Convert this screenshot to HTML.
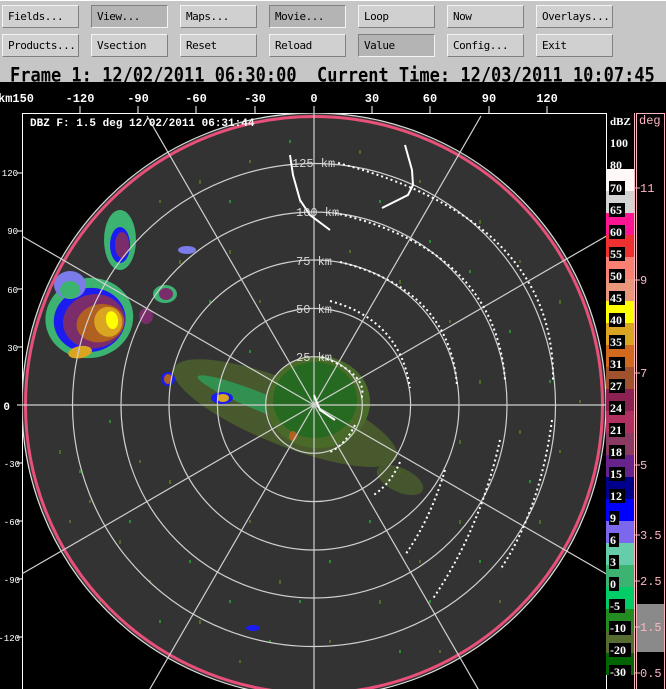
<!DOCTYPE html>
<html><head><meta charset="utf-8"><style>
*{margin:0;padding:0;box-sizing:border-box}
body{width:666px;height:689px;overflow:hidden;background:#000;position:relative;font-family:"Liberation Mono","DejaVu Sans Mono",monospace}
#top{position:absolute;left:0;top:0;width:666px;height:82px;background:#c6c6c6;border-top:1px solid #fff}
.b{position:absolute;height:23px;width:77px;background:#d0d0d0;border:1px solid;border-color:#f4f4f4 #808080 #808080 #f4f4f4;font:11px "DejaVu Sans Mono",monospace;color:#000;padding:4px 0 0 5px;letter-spacing:-0.5px;white-space:nowrap}
.b.d{background:#b4b4b4;border-color:#808080 #f4f4f4 #f4f4f4 #808080}
#title{position:absolute;left:10px;top:63px;font:bold 17px "DejaVu Sans Mono",monospace;color:#000;white-space:pre;letter-spacing:0px;height:19px;overflow:hidden;transform:scaleY(1.15);transform-origin:top}
</style></head><body>
<div id="top">
<div class="b" style="left:2px;top:4px">Fields...</div>
<div class="b d" style="left:91px;top:4px">View...</div>
<div class="b" style="left:180px;top:4px">Maps...</div>
<div class="b d" style="left:269px;top:4px">Movie...</div>
<div class="b" style="left:358px;top:4px">Loop</div>
<div class="b" style="left:447px;top:4px">Now</div>
<div class="b" style="left:536px;top:4px">Overlays...</div>
<div class="b" style="left:2px;top:33px">Products...</div>
<div class="b" style="left:91px;top:33px">Vsection</div>
<div class="b" style="left:180px;top:33px">Reset</div>
<div class="b" style="left:269px;top:33px">Reload</div>
<div class="b d" style="left:358px;top:33px">Value</div>
<div class="b" style="left:447px;top:33px">Config...</div>
<div class="b" style="left:536px;top:33px">Exit</div>
<div id="title">Frame 1: 12/02/2011 06:30:00  Current Time: 12/03/2011 10:07:45</div>
</div>
<svg width="666" height="689" style="position:absolute;left:0;top:0" font-family="Liberation Mono, monospace">
<defs>
<clipPath id="fr"><rect x="22" y="113" width="585" height="576"/></clipPath>
<clipPath id="disk"><circle cx="314" cy="405" r="291"/></clipPath>
</defs>
<g fill="#fff" font-size="12" font-weight="bold" text-anchor="middle">
<text x="16" y="102">km150</text>
<text x="80" y="102">-120</text><text x="138" y="102">-90</text><text x="196" y="102">-60</text><text x="255" y="102">-30</text><text x="314" y="102">0</text><text x="372" y="102">30</text><text x="430" y="102">60</text><text x="489" y="102">90</text><text x="547" y="102">120</text>
</g>
<g stroke="#fff" stroke-width="1">
<line x1="22" y1="113.5" x2="607" y2="113.5"/>
<line x1="22.5" y1="113" x2="22.5" y2="689"/>
<line x1="606.5" y1="113" x2="606.5" y2="689"/>
<line x1="80" y1="106" x2="80" y2="113"/><line x1="138" y1="106" x2="138" y2="113"/><line x1="196" y1="106" x2="196" y2="113"/><line x1="255" y1="106" x2="255" y2="113"/><line x1="314" y1="106" x2="314" y2="113"/><line x1="372" y1="106" x2="372" y2="113"/><line x1="430" y1="106" x2="430" y2="113"/><line x1="489" y1="106" x2="489" y2="113"/><line x1="547" y1="106" x2="547" y2="113"/>
<line x1="17" y1="173" x2="22" y2="173"/><line x1="17" y1="231" x2="22" y2="231"/><line x1="17" y1="289" x2="22" y2="289"/><line x1="17" y1="347" x2="22" y2="347"/><line x1="17" y1="405" x2="22" y2="405"/><line x1="17" y1="463" x2="22" y2="463"/><line x1="17" y1="521" x2="22" y2="521"/><line x1="17" y1="579" x2="22" y2="579"/><line x1="17" y1="637" x2="22" y2="637"/>
</g>
<g fill="#fff" font-size="9" text-anchor="end">
<text x="18" y="176">120</text><text x="18" y="234">90</text><text x="18" y="293">60</text><text x="18" y="351">30</text><text x="10" y="410" font-size="11" font-weight="bold">0</text><text x="20" y="467">-30</text><text x="20" y="525">-60</text><text x="20" y="583">-90</text><text x="20" y="641">-120</text>
</g>
<g clip-path="url(#fr)">
<circle cx="314" cy="405" r="292" fill="#333"/>
<g clip-path="url(#disk)">
<g stroke="#4e6b2a" stroke-width="2">
<path d="M60 450v4M90 500v3M120 540v4M150 580v3M200 620v4M240 660v3M100 600v3M170 480v4M250 520v3M280 580v4M330 640v3M380 600v4M420 560v3M460 520v4M500 600v3M540 520v4M560 450v3M520 430v4M580 400v3M560 300v4M520 260v3M480 220v4M420 180v3M360 150v4M250 160v3M200 180v4M160 200v3M230 250v4M260 300v3M400 280v4M450 320v3M480 380v4M350 250v3M180 260v4M70 520v3M140 460v3M400 470v4M440 650v3M460 440v4"/>
</g>
<g stroke="#2f8a2f" stroke-width="2">
<path d="M80 470v3M130 520v3M190 560v3M230 600v3M270 640v3M330 560v3M370 520v3M430 600v3M480 560v3M530 480v3M550 380v3M510 330v3M470 270v3M430 240v3M380 200v3M290 140v3M230 200v3M300 200v3M210 300v3M250 350v3M110 420v3M60 560v3M160 620v3M300 600v3M400 650v3M500 640v3"/>
</g>
<g transform="rotate(22 290 415)">
<ellipse cx="285" cy="415" rx="120" ry="32" fill="#4a5e2c" opacity=".9"/>
<ellipse cx="260" cy="414" rx="70" ry="9" fill="#2aa860" opacity=".7"/>
</g>
<ellipse cx="400" cy="480" rx="25" ry="12" fill="#4a5e2c" opacity=".8" transform="rotate(25 400 480)"/>
<ellipse cx="318" cy="402" rx="52" ry="46" fill="#4a6a2a"/>
<ellipse cx="315" cy="400" rx="42" ry="38" fill="#1e6a1e" opacity=".85"/>
<g transform="rotate(-10 90 322)">
<ellipse cx="90" cy="318" rx="44" ry="40" fill="#3cb371"/>
<ellipse cx="90" cy="320" rx="36" ry="32" fill="#1c1cf0"/>
<ellipse cx="94" cy="322" rx="31" ry="27" fill="#7b2d6b"/>
<ellipse cx="100" cy="325" rx="24" ry="19" fill="#b06020"/>
<ellipse cx="108" cy="325" rx="14" ry="15" fill="#daa520"/>
<ellipse cx="112" cy="324" rx="6" ry="9" fill="#ffff00"/>
<ellipse cx="75" cy="350" rx="12" ry="6" fill="#daa520"/>
</g>
<ellipse cx="70" cy="285" rx="16" ry="14" fill="#7b7bea"/>
<ellipse cx="70" cy="290" rx="10" ry="9" fill="#3cb371"/>
<ellipse cx="120" cy="240" rx="16" ry="30" fill="#3cb371"/>
<ellipse cx="120" cy="245" rx="10" ry="18" fill="#1c1cf0"/>
<ellipse cx="122" cy="245" rx="7" ry="13" fill="#7b2d6b"/>
<ellipse cx="165" cy="294" rx="12" ry="9" fill="#3cb371"/>
<ellipse cx="166" cy="294" rx="7" ry="6" fill="#7b2d6b"/>
<ellipse cx="146" cy="316" rx="7" ry="8" fill="#7b2d6b"/>
<ellipse cx="187" cy="250" rx="9" ry="4" fill="#7b7bea"/>
<ellipse cx="168" cy="379" rx="7" ry="7" fill="#1c1cf0"/>
<ellipse cx="168" cy="379" rx="4" ry="5" fill="#b06020"/>
<ellipse cx="222" cy="398" rx="11" ry="6" fill="#1c1cf0"/>
<ellipse cx="223" cy="398" rx="6" ry="4" fill="#daa520"/>
<ellipse cx="293" cy="436" rx="4" ry="5" fill="#b06020"/>
<ellipse cx="253" cy="628" rx="7" ry="3" fill="#1c1cf0"/>
<circle cx="314" cy="405" r="288.5" fill="none" stroke="#e8507a" stroke-width="3"/>
</g>
<circle cx="314" cy="405" r="292" fill="none" stroke="#ddd" stroke-width="1.2"/>
<g fill="none" stroke="#d0d0d0" stroke-width="1.2">
<circle cx="314" cy="405" r="48.3"/><circle cx="314" cy="405" r="96.6"/><circle cx="314" cy="405" r="145"/><circle cx="314" cy="405" r="193"/><circle cx="314" cy="405" r="241.5"/>
<line x1="314" y1="113" x2="314" y2="689"/>
<line x1="22" y1="405" x2="607" y2="405"/>
<line x1="147" y1="116" x2="481" y2="694"/>
<line x1="481" y1="116" x2="147" y2="694"/>
<line x1="-186" y1="116" x2="814" y2="694"/>
<line x1="814" y1="116" x2="-186" y2="694"/>
</g>
<g fill="none" stroke="#fff" stroke-width="2" stroke-dasharray="2 3">
<path d="M322 357 Q370 375 361 400"/>
<path d="M355 425 Q345 445 330 452"/>
<path d="M330 301 Q400 320 410 388"/>
<path d="M400 462 Q390 485 372 496"/>
<path d="M340 262 Q450 290 457 386"/>
<path d="M445 470 Q430 520 405 555"/>
<path d="M335 213 Q495 250 505 380"/>
<path d="M500 440 Q480 530 432 600"/>
<path d="M338 163 Q555 220 553 380"/>
<path d="M552 420 Q540 510 500 570"/>
</g>
<g fill="none" stroke="#fff" stroke-width="2">
<path d="M290 155 L293 175 L300 200 L310 215 L330 230"/>
<path d="M405 145 L412 170 L413 185 L408 195 L392 203 L382 208"/>
<path d="M314 395 L320 410 L335 420"/>
</g>
<g fill="#d8d8d8" font-size="12">
<text x="292" y="167">125 km</text><text x="296" y="216">100 km</text><text x="296" y="265">75 km</text><text x="296" y="313">50 km</text><text x="296" y="361">25 km</text>
</g>
<text x="30" y="126" fill="#fff" font-size="11" font-weight="bold">DBZ F: 1.5 deg 12/02/2011 06:31:44</text>
</g>
<g>
<rect x="606" y="169" width="28" height="22" fill="#fff8f8"/>
<rect x="606" y="191" width="28" height="22" fill="#d3d3d3"/>
<rect x="606" y="213" width="28" height="22" fill="#ff1493"/>
<rect x="606" y="235" width="28" height="22" fill="#ee3030"/>
<rect x="606" y="257" width="28" height="22" fill="#fa8072"/>
<rect x="606" y="279" width="28" height="22" fill="#e9967a"/>
<rect x="606" y="301" width="28" height="22" fill="#ffff00"/>
<rect x="606" y="323" width="28" height="22" fill="#daa520"/>
<rect x="606" y="345" width="28" height="22" fill="#d2691e"/>
<rect x="606" y="367" width="28" height="22" fill="#a0522d"/>
<rect x="606" y="389" width="28" height="22" fill="#8b2252"/>
<rect x="606" y="411" width="28" height="22" fill="#b03060"/>
<rect x="606" y="433" width="28" height="22" fill="#8b3a62"/>
<rect x="606" y="455" width="28" height="22" fill="#68228b"/>
<rect x="606" y="477" width="28" height="22" fill="#00008b"/>
<rect x="606" y="499" width="28" height="22" fill="#0000ff"/>
<rect x="606" y="521" width="28" height="22" fill="#7b68ee"/>
<rect x="606" y="543" width="28" height="22" fill="#66cdaa"/>
<rect x="606" y="565" width="28" height="22" fill="#3cb371"/>
<rect x="606" y="587" width="28" height="22" fill="#00cd66"/>
<rect x="606" y="609" width="28" height="22" fill="#228b22"/>
<rect x="606" y="631" width="28" height="22" fill="#556b2f"/>
<rect x="606" y="653" width="28" height="22" fill="#006400"/>
</g>
<g fill="#000">
<rect x="609" y="181" width="16" height="14"/><rect x="609" y="203" width="16" height="14"/><rect x="609" y="225" width="16" height="14"/><rect x="609" y="247" width="16" height="14"/><rect x="609" y="269" width="16" height="14"/><rect x="609" y="291" width="16" height="14"/><rect x="609" y="313" width="16" height="14"/><rect x="609" y="335" width="16" height="14"/><rect x="609" y="357" width="16" height="14"/><rect x="609" y="379" width="16" height="14"/><rect x="609" y="401" width="16" height="14"/><rect x="609" y="423" width="16" height="14"/><rect x="609" y="445" width="16" height="14"/><rect x="609" y="467" width="16" height="14"/><rect x="609" y="489" width="16" height="14"/><rect x="609" y="511" width="10" height="14"/><rect x="609" y="533" width="10" height="14"/><rect x="609" y="555" width="10" height="14"/><rect x="609" y="577" width="10" height="14"/><rect x="609" y="599" width="16" height="14"/><rect x="609" y="621" width="22" height="14"/><rect x="609" y="643" width="22" height="14"/><rect x="609" y="665" width="22" height="14"/>
</g>
<g fill="#fff" font-size="12" font-weight="bold" font-family="Liberation Serif, serif">
<text x="610" y="125" font-size="11">dBZ</text>
<text x="610" y="147">100</text><text x="610" y="169">80</text>
<text x="610" y="192">70</text><text x="610" y="214">65</text><text x="610" y="236">60</text><text x="610" y="258">55</text><text x="610" y="280">50</text><text x="610" y="302">45</text><text x="610" y="324">40</text><text x="610" y="346">35</text><text x="610" y="368">31</text><text x="610" y="390">27</text><text x="610" y="412">24</text><text x="610" y="434">21</text><text x="610" y="456">18</text><text x="610" y="478">15</text><text x="610" y="500">12</text><text x="610" y="522">9</text><text x="610" y="544">6</text><text x="610" y="566">3</text><text x="610" y="588">0</text><text x="610" y="610">-5</text><text x="610" y="632">-10</text><text x="610" y="654">-20</text><text x="610" y="676">-30</text>
</g>
<rect x="636" y="604" width="28" height="48" fill="#8a8a8a"/>
<g stroke="#ffb6c1" stroke-width="1" fill="none">
<line x1="634.5" y1="113" x2="634.5" y2="689"/>
<line x1="636.5" y1="113" x2="636.5" y2="689"/>
<line x1="664.5" y1="113" x2="664.5" y2="689"/>
<line x1="636" y1="113.5" x2="664" y2="113.5"/>
<line x1="634" y1="188" x2="640" y2="188"/><line x1="634" y1="280" x2="640" y2="280"/><line x1="634" y1="373" x2="640" y2="373"/><line x1="634" y1="465" x2="640" y2="465"/><line x1="634" y1="535" x2="640" y2="535"/><line x1="634" y1="581" x2="640" y2="581"/><line x1="634" y1="627" x2="640" y2="627"/><line x1="634" y1="673" x2="640" y2="673"/>
</g>
<g fill="#ffb6c1" font-size="12">
<text x="639" y="124">deg</text>
<text x="640" y="192">11</text><text x="640" y="284">9</text><text x="640" y="377">7</text><text x="640" y="469">5</text><text x="640" y="539">3.5</text><text x="640" y="585">2.5</text><text x="640" y="631">1.5</text><text x="640" y="677">0.5</text>
</g>
</svg>
</body></html>
